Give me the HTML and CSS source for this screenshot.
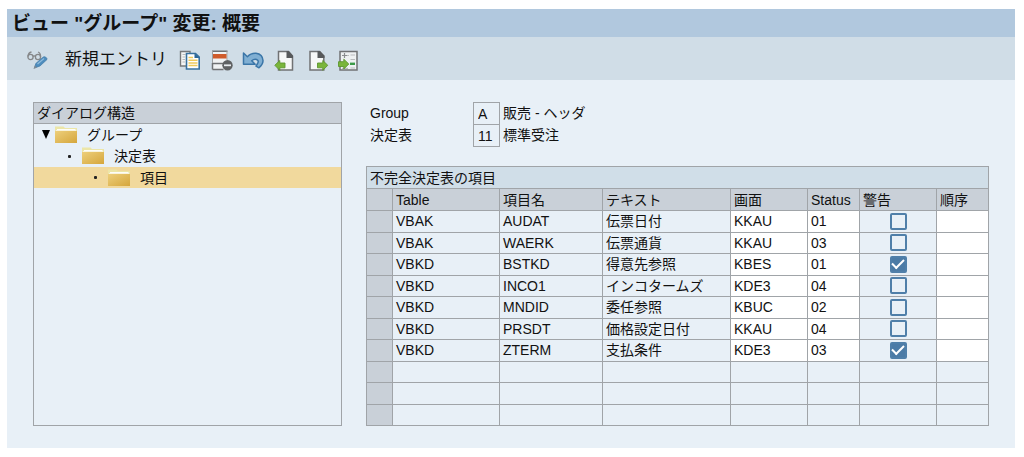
FILE: index.html
```html
<!DOCTYPE html>
<html lang="ja">
<head>
<meta charset="utf-8">
<meta name="viewport" content="width=device-width, initial-scale=1">
<title>ビュー "グループ" 変更: 概要</title>
<link rel="stylesheet" href="styles.css">
</head>
<body>
<svg class="defs" aria-hidden="true">
  <defs>
    <linearGradient id="gold" x1="0" y1="0" x2="1" y2="1">
      <stop offset="0" stop-color="#edcf7b"/><stop offset="1" stop-color="#d5a63c"/>
    </linearGradient>
    <symbol id="folder" viewBox="0 0 24 20">
      <path d="M1 3V1.500h8.500l1.500 1.500h12v4H1z" fill="#ece6a8"/>
      <path d="M3 4h18.500v3H3z" fill="#fdfdf8"/>
      <path d="M1 6h22v12H1z" fill="url(#gold)"/>
      <path d="M2 5.500h20" stroke="#f8f3dc" stroke-width="1"/>
    </symbol>
  </defs>
</svg>
<main class="window">
  <h1 class="title">ビュー "グループ" 変更: 概要</h1>
  <div class="toolbar">
    <button class="tool" type="button" aria-label="照会/変更">
      <svg width="24" height="24" viewBox="0 0 24 24" fill="none">
        <g stroke="#858789" stroke-width="1.300">
          <circle cx="5.500" cy="9" r="2.600"/><circle cx="13" cy="9" r="2.600"/>
          <path d="M8 8.500q1.200-1.200 2.500 0M3 8.500q.3-4 3.500-4.500M15.500 9q.3-4-2.500-5"/>
        </g>
        <path d="M9.500 20l1.300-4.500 7.500-6.500q1-.8 2.500.2t1.200 2.300l-7 6.500z" fill="#4d8cbd" stroke="#3f78a6" stroke-width=".7"/>
        <path d="M12.500 16l6.500-5.500" stroke="#8fbbdc" stroke-width="1.200"/>
        <path d="M8.500 21l1.200-3.500 2.300 2z" fill="#7e8a94"/>
      </svg>
    </button>
    <button class="text-tool" type="button">新規エントリ</button>
    <div class="tool-group">
      <button class="tool" type="button" aria-label="コピー">
        <svg width="24" height="24" viewBox="0 0 24 24" fill="none">
          <path d="M2.500 3.500h9.500V18H2.500z" fill="#f5f6f6" stroke="#77797b" stroke-width="1.400"/>
          <path d="M4.500 6.500h3M4.500 9h2.500M4.500 11.500h2.500M4.500 14h2.500" stroke="#b9bbbd"/>
          <path d="M8.500 5.500h9l3.700 3.700V21H8.500z" fill="#fff" stroke="#38719f" stroke-width="1.600"/>
          <path d="M16.500 5l5 5h-5z" fill="#2c6798"/>
          <path d="M10.500 9.500h4.500M10.500 12.200h9M10.500 14.900h9M10.500 17.600h9" stroke="#efca5b" stroke-width="1.500"/>
        </svg>
      </button>
      <button class="tool" type="button" aria-label="削除">
        <svg width="24" height="24" viewBox="0 0 24 24" fill="none">
          <path d="M2 3.200h15.500V21.500H2z" fill="#f0f2f3"/>
          <path d="M2.500 21.500V15M2.500 21.500h11M2 3.200h15.500M2 15.500h12" stroke="#6f7173" stroke-width="1.500"/>
          <path d="M2.500 3v12M17 3v9" stroke="#9d9fa1"/>
          <path d="M3 6h13.500v4.500H3z" fill="#cf5b2b"/>
          <circle cx="17.500" cy="17.300" r="5.200" fill="#5f6163"/>
          <path d="M14 17.300h7" stroke="#e7ebee" stroke-width="1.800"/>
        </svg>
      </button>
      <button class="tool" type="button" aria-label="取消">
        <svg width="24" height="24" viewBox="0 0 24 24" fill="none">
          <path d="M1.500 5v11.300h11.700l-3.500-3.500q2.600-2.200 4.800-1.300 3 1.200.8 4.500l-1.300 2.200 3 1.600q4.200-3.700 4-7.300-.4-6.300-7-7.200-5-.4-8.600 3.500z" fill="#80afd3" stroke="#3b76a8" stroke-width="1.500" stroke-linejoin="round"/>
        </svg>
      </button>
      <button class="tool" type="button" aria-label="前エントリ">
        <svg width="24" height="24" viewBox="0 0 24 24" fill="none">
          <path d="M4.500 3.500h10l4 4.500v14h-14z" fill="#f6f7f7" stroke="#707274" stroke-width="1.500"/>
          <path d="M12.500 3h2.200l4.300 4.700V10h-6.500z" fill="#57595b"/>
          <path d="M.8 17.300l5-4.800V15H11v4.800H5.800v2.500z" fill="#7ab53b" stroke="#5d9630" stroke-width=".9"/>
        </svg>
      </button>
      <button class="tool" type="button" aria-label="次エントリ">
        <svg width="24" height="24" viewBox="0 0 24 24" fill="none">
          <path d="M4 3.500h9.500l4.300 4.500v14H4z" fill="#f6f7f7" stroke="#707274" stroke-width="1.500"/>
          <path d="M11.500 3H14l4.500 4.700V10h-7z" fill="#57595b"/>
          <path d="M21.800 17.300l-5-4.800V15h-5.300v4.800h5.300v2.500z" fill="#7ab53b" stroke="#5d9630" stroke-width=".9"/>
        </svg>
      </button>
      <button class="tool" type="button" aria-label="他のエントリ">
        <svg width="24" height="24" viewBox="0 0 24 24" fill="none">
          <path d="M2 3.500h17V22H2z" fill="#eef1f2" stroke="#707274" stroke-width="1.500"/>
          <path d="M4 7.500h5M6.500 5v5M9.500 7.500h1" stroke="#8b8d8f" stroke-width="1.200"/>
          <path d="M12.500 7h4.500M12.500 11.500h4.500M4 20.300h6M12.500 20h4.500" stroke="#b9bcbe" stroke-width="1.200"/>
          <path d="M12 15.800h5" stroke="#3b9a48" stroke-width="2.400"/>
          <path d="M10.800 16l-5-4.800v2.500H.5v4.800h5.300V21z" fill="#7ab53b" stroke="#5d9630" stroke-width=".9"/>
        </svg>
      </button>
    </div>
  </div>
  <div class="content">
    <section class="tree">
      <h2 class="tree-title">ダイアログ構造</h2>
      <ul class="tree-list">
        <li class="node level-1"><span class="mark"><svg width="8" height="9" viewBox="0 0 8 9"><path d="M0 0h8L4 9z" fill="#000"/></svg></span><svg class="folder" width="24" height="20"><use href="#folder"/></svg><span>グループ</span></li>
        <li class="node level-2"><span class="mark dot"></span><svg class="folder" width="24" height="20"><use href="#folder"/></svg><span>決定表</span></li>
        <li class="node level-3 selected"><span class="mark dot"></span><svg class="folder" width="24" height="20"><use href="#folder"/></svg><span>項目</span></li>
      </ul>
    </section>
    <section class="detail">
      <div class="fields">
        <label for="group">Group</label><input id="group" value="A" readonly><span>販売 - ヘッダ</span>
        <label for="decision">決定表</label><input id="decision" value="11" readonly><span>標準受注</span>
      </div>
      <table class="grid">
        <colgroup><col class="c-sel"><col class="c-table"><col class="c-item"><col class="c-text"><col class="c-screen"><col class="c-status"><col class="c-warn"><col class="c-order"></colgroup>
        <thead>
          <tr><th class="grid-title" colspan="8">不完全決定表の項目</th></tr>
          <tr class="heads"><th></th><th>Table</th><th>項目名</th><th>テキスト</th><th>画面</th><th>Status</th><th>警告</th><th>順序</th></tr>
        </thead>
        <tbody>
          <tr><td class="sel"></td><td>VBAK</td><td>AUDAT</td><td>伝票日付</td><td class="edit">KKAU</td><td class="edit">01</td><td class="warn"><input type="checkbox" aria-label="警告 AUDAT"></td><td class="edit"></td></tr>
          <tr><td class="sel"></td><td>VBAK</td><td>WAERK</td><td>伝票通貨</td><td class="edit">KKAU</td><td class="edit">03</td><td class="warn"><input type="checkbox" aria-label="警告 WAERK"></td><td class="edit"></td></tr>
          <tr><td class="sel"></td><td>VBKD</td><td>BSTKD</td><td>得意先参照</td><td class="edit">KBES</td><td class="edit">01</td><td class="warn"><input type="checkbox" aria-label="警告 BSTKD" checked></td><td class="edit"></td></tr>
          <tr><td class="sel"></td><td>VBKD</td><td>INCO1</td><td>インコタームズ</td><td class="edit">KDE3</td><td class="edit">04</td><td class="warn"><input type="checkbox" aria-label="警告 INCO1"></td><td class="edit"></td></tr>
          <tr><td class="sel"></td><td>VBKD</td><td>MNDID</td><td>委任参照</td><td class="edit">KBUC</td><td class="edit">02</td><td class="warn"><input type="checkbox" aria-label="警告 MNDID"></td><td class="edit"></td></tr>
          <tr><td class="sel"></td><td>VBKD</td><td>PRSDT</td><td>価格設定日付</td><td class="edit">KKAU</td><td class="edit">04</td><td class="warn"><input type="checkbox" aria-label="警告 PRSDT"></td><td class="edit"></td></tr>
          <tr><td class="sel"></td><td>VBKD</td><td>ZTERM</td><td>支払条件</td><td class="edit">KDE3</td><td class="edit">03</td><td class="warn"><input type="checkbox" aria-label="警告 ZTERM" checked></td><td class="edit"></td></tr>
          <tr><td class="sel"></td><td></td><td></td><td></td><td></td><td></td><td></td><td></td></tr>
          <tr><td class="sel"></td><td></td><td></td><td></td><td></td><td></td><td></td><td></td></tr>
          <tr><td class="sel"></td><td></td><td></td><td></td><td></td><td></td><td></td><td></td></tr>
        </tbody>
      </table>
    </section>
  </div>
</main>
</body>
</html>
```

FILE: styles.css
```css
* { box-sizing: border-box; }

body {
  margin: 0;
  padding: 9px 9px 9px 7px;
  background: #fff;
  color: #111;
  font: 14px/20px "Liberation Sans", "Noto Sans CJK JP", sans-serif;
}

.defs { position: absolute; width: 0; height: 0; }

.window { background: #e8f0f7; }

.title {
  margin: 0;
  padding: 2px 5px 0;
  background: #b1c8de;
  font-size: 19px;
  line-height: 26px;
  font-weight: bold;
}

.toolbar {
  display: flex;
  align-items: center;
  height: 43px;
  padding: 3px 18px 0;
  background: #d0dde7;
}

.tool, .text-tool {
  display: block;
  margin: 0;
  padding: 0;
  border: 0;
  background: none;
  color: inherit;
  font: inherit;
}

.tool svg { display: block; }

.text-tool {
  margin: 0 11px 0 16px;
  font-size: 17px;
  line-height: 24px;
}

.tool-group { display: flex; gap: 8px; }

.content {
  display: grid;
  grid-template-columns: 310fr 622fr;
  gap: 24px;
  padding: 22px 26px;
}

.tree { border: 1px solid #a0a4a8; }

.tree-title {
  margin: 0;
  padding: 0 3px;
  border-bottom: 1px solid #a0a4a8;
  background: #c9d0d8;
  font-size: 14px;
  line-height: 20px;
  font-weight: normal;
}

.tree-list { margin: 0; padding: 0; list-style: none; }

.node { display: flex; align-items: center; height: 21px; }
.level-1 { padding-left: 8px; }
.level-2 { padding-left: 34px; height: 22px; }
.level-3 { padding-left: 60px; }
.selected { background: #f1d99d; }
.mark { display: flex; width: 12px; }
.dot { width: 13px; }
.dot::before {
  content: "";
  width: 3px;
  height: 3px;
  border-radius: 1px;
  background: #222;
}
.folder { margin-right: 9px; }

.fields {
  display: grid;
  grid-template-columns: 103px 27px 1fr;
  grid-auto-rows: 22px;
  align-items: center;
  padding: 0 4px;
}

.fields input {
  width: 27px;
  height: 23px;
  margin: 0 0 -1px;
  padding: 0 0 0 4px;
  border: 1px solid #a0a4a8;
  border-radius: 0;
  background: transparent;
  color: inherit;
  font: inherit;
}

.fields span { padding-left: 3px; }

.grid {
  width: 100%;
  height: 260px;
  margin-top: 20px;
  border-collapse: collapse;
  table-layout: fixed;
}

.grid th, .grid td {
  height: 21px;
  padding: 0 3px;
  border: 1px solid #a0a4a8;
  font-weight: normal;
  line-height: 20px;
  text-align: left;
  white-space: nowrap;
}

.grid th { height: 22px; }
.grid .grid-title { background: #d0dee8; }
.heads th, .sel { background: #c9d0d8; }
.grid .edit { background: #fff; }

.c-sel { width: 26px; }
.c-table { width: 107px; }
.c-item { width: 103px; }
.c-text { width: 128px; }
.c-screen { width: 77px; }
.c-status { width: 52px; }
.c-warn { width: 77px; }
.c-order { width: 52px; }

.grid .warn { text-align: center; }

.warn input {
  appearance: none;
  display: block;
  width: 17px;
  height: 17px;
  margin: 0 auto;
  border: 2px solid #4f7fa9;
  border-radius: 2px;
}

.warn input:checked {
  display: grid;
  place-items: center;
  background: #4b7ba6;
}

.warn input:checked::before {
  content: "";
  width: 10px;
  height: 5px;
  margin-bottom: 3px;
  border: solid #fff;
  border-width: 0 0 2px 2px;
  transform: rotate(-45deg);
}
```
